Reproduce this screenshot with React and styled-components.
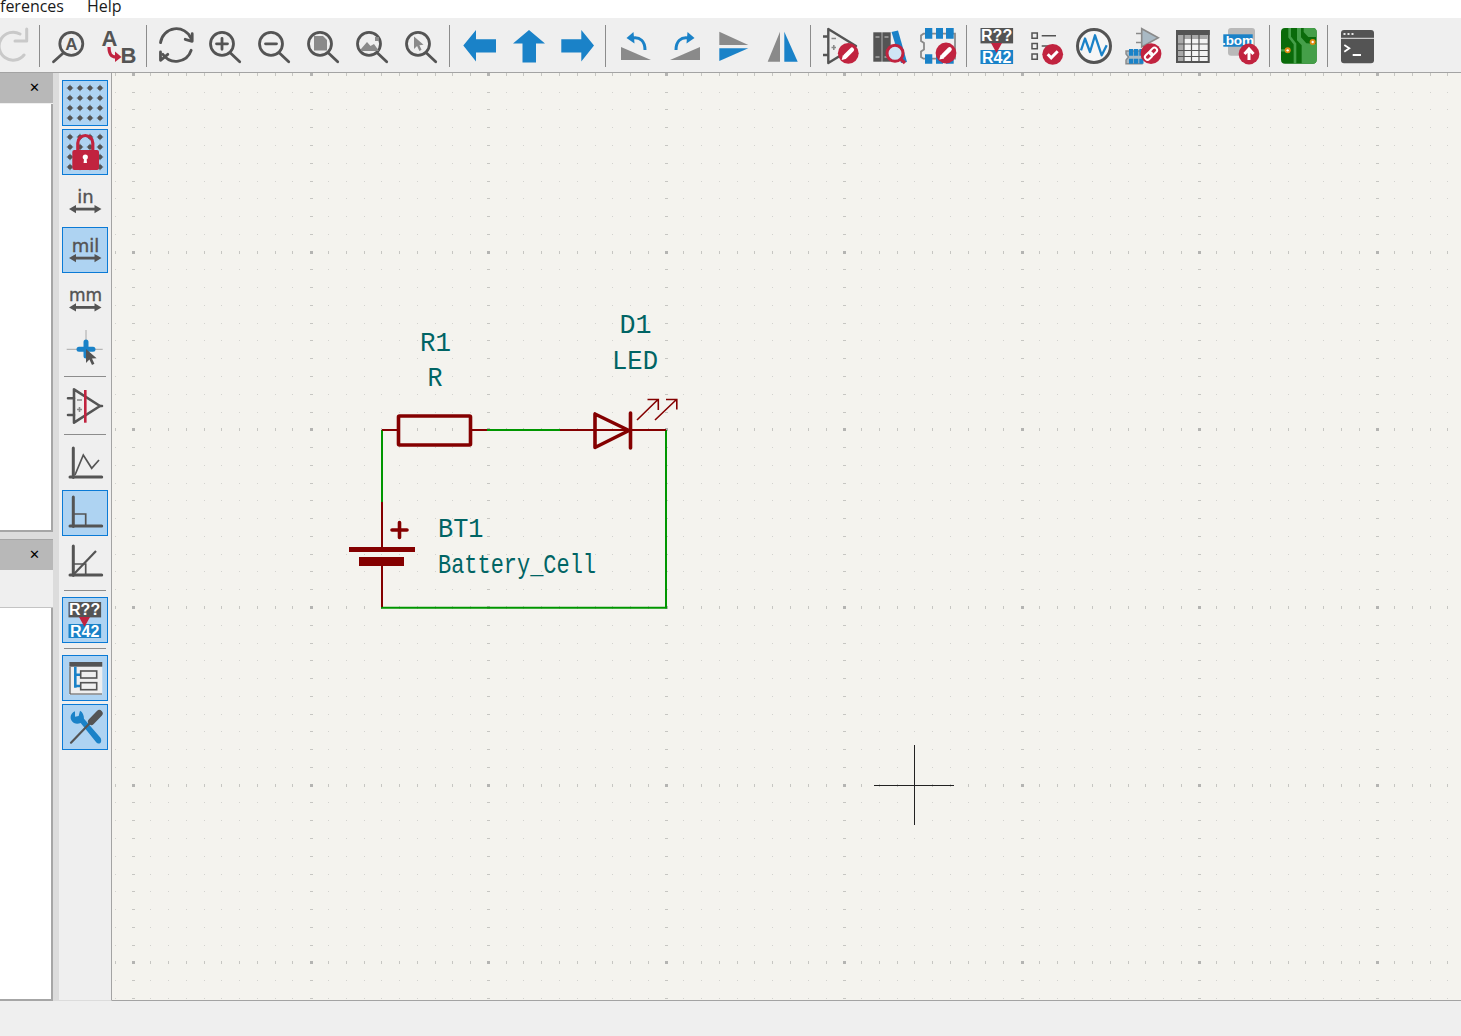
import React from 'react';
import styled, { createGlobalStyle } from 'styled-components';

const DARK = '#545454';
const GREY = '#8a8a8a';
const BLUE = '#1a82c8';
const RED = '#c1233f';
const WIRE = '#009600';
const SYM = '#840000';
const FIELD = '#006464';

const GlobalStyle = createGlobalStyle`
  html, body {
    margin: 0;
    padding: 0;
    background: #efefef;
    font-family: "Open Sans", "Liberation Sans", sans-serif;
    overflow: hidden;
  }
`;

const Window = styled.div`
  display: flex;
  flex-direction: column;
  height: 1036px;
  overflow: hidden;
`;

const MenuBar = styled.div`
  display: flex;
  gap: 23px;
  height: 18px;
  flex: none;
  background: #fff;
  overflow: hidden;
`;

const MenuItem = styled.span`
  margin-top: -5px;
  font-size: 16px;
  line-height: 22px;
  color: #1a1a1a;
`;

const Toolbar = styled.div`
  display: flex;
  gap: 3px;
  height: 55px;
  flex: none;
  box-sizing: border-box;
  padding-top: 5px;
  margin-left: -11px;
  background: #efefef;
  border-bottom: 1px solid #a3a3a3;
`;

const ToolButton = styled.div`
  width: 46px;
  height: 46px;
  flex: none;
`;

const ToolSeparator = styled.div`
  width: 6px;
  height: 42px;
  margin-top: 2px;
  flex: none;
  box-sizing: border-box;
  border-left: 1px solid #8c8c8c;
  margin-left: 1px;
  margin-right: -1px;
`;

const Main = styled.div`
  display: flex;
  flex: none;
  height: 928px;
`;

const Dock = styled.div`
  display: flex;
  flex-direction: column;
  gap: 7px;
  width: 59px;
  flex: none;
  background: #dcdcdc;
`;

const Panel = styled.div`
  display: flex;
  flex-direction: column;
  width: 53px;
  box-sizing: border-box;
  background: #fff;
  border-right: 2px solid #a6a6a6;
  border-bottom: 2px solid #a6a6a6;
  min-height: 0;
`;

const UpperPanel = styled(Panel)`
  flex: none;
  height: 459px;
`;

const LowerPanel = styled(Panel)`
  flex: 1;
  border-top: 1px solid #a6a6a6;
`;

const PanelHeader = styled.div`
  display: flex;
  align-items: center;
  justify-content: flex-end;
  height: 31px;
  flex: none;
  box-sizing: border-box;
  margin-right: -2px;
  padding: 0 13px 2px 0;
  background: #b8b8b8;
  border-bottom: 1px solid #efefef;
  font-family: "DejaVu Sans", sans-serif;
  font-size: 13px;
  color: #000;
`;

const PanelRow = styled.div`
  height: 36px;
  flex: none;
  margin-right: -2px;
  background: #efefef;
  border-bottom: 1px solid #c4c4c4;
`;

const Palette = styled.div`
  display: flex;
  flex-direction: column;
  align-items: flex-start;
  gap: 3px;
  width: 53px;
  flex: none;
  box-sizing: border-box;
  padding: 7px 0 0 3px;
  background: #efefef;
  border-right: 1px solid #a3a3a3;
  border-bottom: 1px solid #dcdcdc;
`;

const PaletteButton = styled.div`
  width: 46px;
  height: 46px;
  flex: none;
  box-sizing: border-box;
  background: ${({ $active }) => ($active ? '#aed3f2' : 'transparent')};
  border: 1px solid ${({ $active }) => ($active ? '#0a7ad6' : 'transparent')};
  display: flex;
  align-items: center;
  justify-content: center;
`;

const PaletteSeparator = styled.div`
  width: 42px;
  height: 6px;
  margin-left: 2px;
  flex: none;
  box-sizing: border-box;
  padding-top: 2px;

  &::before {
    content: '';
    display: block;
    height: 1px;
    background: #8c8c8c;
  }
`;

const Canvas = styled.div`
  position: relative;
  flex: 1;
  background: #f4f3ee;
  border-bottom: 1px solid #a3a3a3;
  overflow: hidden;
`;

const Sheet = styled.svg`
  position: absolute;
  inset: 0;
  display: block;
`;

const StatusBar = styled.div`
  flex: 1;
  background: #efefef;
`;

const IconSvg = styled.svg`
  display: block;
  width: 46px;
  height: 46px;
  flex: none;
`;

const IconLabel = styled.text`
  font-family: ${({ $family }) => $family || '"Liberation Sans", sans-serif'};
  font-weight: ${({ $weight }) => $weight || 700};
  font-size: ${({ $size }) => $size}px;
  fill: ${({ $fill }) => $fill || DARK};
  text-anchor: middle;
`;

const FieldText = styled.text`
  font-family: "Liberation Mono", "DejaVu Sans Mono", monospace;
  font-size: 28px;
  fill: ${FIELD};
`;

const Icon = ({ children }) => (
  <IconSvg viewBox="-23 -23 46 46">{children}</IconSvg>
);

const line = { fill: 'none', stroke: DARK, strokeWidth: 2.8, strokeLinecap: 'round', strokeLinejoin: 'round' };

// magnifier used by the zoom buttons
const Lens = ({ children }) => (
  <Icon>
    <g transform="translate(-1 0)">
      <circle cx="-3" cy="-2.2" r="11.5" {...line} />
      <path d="M5.7 7.3 L14.7 15.7" {...line} />
      {children}
    </g>
  </Icon>
);

const Badge = ({ cx = 7, cy = 7.5, children }) => (
  <g transform={`translate(${cx} ${cy})`}>
    <circle r="10.4" fill={RED} />
    {children}
  </g>
);

const Pencil = () => (
  <g>
    <path d="M-2.8 2.8 L3.6 -3.6" stroke="#fff" strokeWidth="4.4" strokeLinecap="round" />
    <path d="M-6.6 6.6 L-5.4 1.8 L-1.8 5.4 Z" fill="#fff" />
  </g>
);

const Cursor = ({ x, y, fill = GREY, s = 1 }) => (
  <path
    transform={`translate(${x} ${y}) scale(${s})`}
    d="M0 0 L0 14 L3.4 10.6 L6 16 L8.4 14.8 L6 9.6 L10.6 9.2 Z"
    fill={fill}
  />
);

const Annotate = () => (
  <Icon>
    <rect x="-16.5" y="-18" width="32.6" height="15.4" fill={DARK} />
    <rect x="-16.5" y="4" width="32.6" height="14" fill={BLUE} />
    <IconLabel x="-0.4" y="-5" $size={16} $fill="#fff">R??</IconLabel>
    <IconLabel x="-0.4" y="16.6" $size={16} $fill="#fff">R42</IconLabel>
    <path d="M-6 -3 L5 -3 L-0.5 7 Z" fill={RED} />
  </Icon>
);

const OpAmpOutline = () => (
  <>
    <path d="M-11 -16.7 L-11 16.7 L15 0 Z" fill="none" stroke={DARK} strokeWidth="2.6" strokeLinejoin="round" />
    <path d="M-17 -7.7 L-11 -7.7 M-17 9 L-11 9 M15 0 L17 0" stroke={DARK} strokeWidth="2.6" strokeLinecap="round" />
    <path d="M-8 -6 L-3 -6 M-8 3.5 L-3 3.5 M-5.5 1 L-5.5 6" stroke={GREY} strokeWidth="1.6" />
  </>
);

const PlotAxes = () => (
  <path d="M-11.7 -16 L-11.7 13.5 M-15 13 L16.7 13" fill="none" stroke={DARK} strokeWidth="3" strokeLinecap="round" />
);

const Units = ({ label, y, size = 18 }) => (
  <Icon>
    <IconLabel
      x="0.5"
      y={y}
      $size={size}
      $weight={400}
      $family={'"DejaVu Sans", sans-serif'}
      stroke={DARK}
      strokeWidth="0.4"
    >
      {label}
    </IconLabel>
    <path d={`M-11 ${y + 6.4} L12 ${y + 6.4}`} stroke={DARK} strokeWidth="2.8" />
    <path d={`M-16 ${y + 6.4} L-9 ${y + 2.2} L-9 ${y + 10.6} Z M16.5 ${y + 6.4} L9.5 ${y + 2.2} L9.5 ${y + 10.6} Z`} fill={DARK} />
  </Icon>
);

const GRID_DOTS = [-15, -5, 5, 15].flatMap((y) => [-15, -5, 5, 15].map((x) => [x, y]));

const GridDots = () => GRID_DOTS.map(([x, y]) => (
  <g key={`${x}_${y}`} fill={DARK}>
    <circle cx={x} cy={y} r="2.3" />
    <path d={`M${x - 3.2} ${y} H${x + 3.2} M${x} ${y - 3.2} V${y + 3.2}`} stroke={DARK} strokeWidth="1" />
  </g>
));

const ICONS = {
  redo: (
    <Icon>
      <path d="M8 -12 A14 14 0 1 0 12 9" fill="none" stroke="#c9c9c9" strokeWidth="3" strokeLinecap="round" />
      <path d="M3 -5 L14.7 -5 L14.7 -17" fill="none" stroke="#c9c9c9" strokeWidth="3" strokeLinecap="round" strokeLinejoin="round" />
    </Icon>
  ),
  find: (
    <Icon>
      <circle cx="1.3" cy="-2.2" r="11.5" {...line} />
      <path d="M-7 7.3 L-16.5 15.7" {...line} />
      <IconLabel x="1.3" y="3.8" $size={17}>A</IconLabel>
    </Icon>
  ),
  replace: (
    <Icon>
      <IconLabel x="-9.5" y="0" $size={22}>A</IconLabel>
      <IconLabel x="9.5" y="17" $size={22}>B</IconLabel>
      <path d="M-10 1 C-10 8 -8 11 -3 11" fill="none" stroke={RED} strokeWidth="3.2" />
      <path d="M-4 5.5 L2.5 11 L-4 16 Z" fill={RED} />
    </Icon>
  ),
  refresh: (
    <Icon>
      <g transform="translate(-0.5 0)">
        <path d="M-16 -3.3 A16 16 0 0 1 14.7 -7.3" {...line} />
        <path d="M15.7 -12.3 L15.7 -4.7 L8.7 -6.7" {...line} />
        <path d="M14.7 4.3 A16 16 0 0 1 -13.7 8.3" {...line} />
        <path d="M-16 6 L-16 14.3 L-8.7 8.3" {...line} />
      </g>
    </Icon>
  ),
  zoomIn: (
    <Lens>
      <path d="M-8.5 -2.2 H2.5 M-3 -7.7 V3.3" {...line} />
    </Lens>
  ),
  zoomOut: (
    <Lens>
      <path d="M-8.5 -2.2 H2.5" {...line} />
    </Lens>
  ),
  zoomFit: (
    <Lens>
      <path d="M-9 -10 L0 -10 L4 -6 L4 4.5 L-9 4.5 Z" fill={GREY} />
    </Lens>
  ),
  zoomObjects: (
    <Lens>
      <path d="M-11 5 L-11 3 L-5 -4 L-1.5 0 L2 -2 L7 5 Z" fill={GREY} />
      <rect x="3" y="-9" width="4" height="4" fill={GREY} />
    </Lens>
  ),
  zoomSelect: (
    <Lens>
      <Cursor x={-7} y={-9.5} s={0.9} />
    </Lens>
  ),
  left: (
    <Icon>
      <path d="M-16.7 -0.5 L-4 -16 L-4 -6.8 L16 -6.8 L16 6.5 L-4 6.5 L-4 15.5 Z" fill={BLUE} />
    </Icon>
  ),
  up: (
    <Icon>
      <path d="M0 -16 L16 -2.5 L7 -2.5 L7 16.5 L-6.5 16.5 L-6.5 -2.5 L-16 -2.5 Z" fill={BLUE} />
    </Icon>
  ),
  right: (
    <Icon>
      <path d="M16 -0.5 L3.3 -16 L3.3 -6.8 L-16.7 -6.8 L-16.7 6.5 L3.3 6.5 L3.3 15.5 Z" fill={BLUE} />
    </Icon>
  ),
  rotateCcw: (
    <Icon>
      <path d="M-15 1 L-15 14 L15 14 Z" fill={GREY} />
      <path d="M9 4 C9 -5 4 -9 -3 -8" fill="none" stroke={BLUE} strokeWidth="3" />
      <path d="M-9.5 -8 L-2.5 -14 L-1.5 -2.5 Z" fill={BLUE} />
    </Icon>
  ),
  rotateCw: (
    <Icon>
      <path d="M15 1 L15 14 L-15 14 Z" fill={GREY} />
      <path d="M-9 4 C-9 -5 -4 -9 3 -8" fill="none" stroke={BLUE} strokeWidth="3" />
      <path d="M9.5 -8 L2.5 -14 L1.5 -2.5 Z" fill={BLUE} />
    </Icon>
  ),
  mirrorH: (
    <Icon>
      <path d="M-14.7 -14.3 L-14.7 -1 L14.3 -1 Z" fill={GREY} />
      <path d="M-14.7 2.3 L-14.7 15 L14.3 2.3 Z" fill={BLUE} />
    </Icon>
  ),
  mirrorV: (
    <Icon>
      <path d="M-15.3 15.7 L-3 -14.3 L-3 15.7 Z" fill={GREY} />
      <path d="M1.3 -14.3 L1.3 15.7 L14.7 15.7 Z" fill={BLUE} />
    </Icon>
  ),
  symbolEditor: (
    <Icon>
      <path d="M-12.7 -17 L-12.7 17 L15 0 Z" fill="none" stroke={DARK} strokeWidth="2.4" strokeLinejoin="round" />
      <path d="M-18 -9.5 L-12.7 -9.5 M-18 9 L-12.7 9" stroke={DARK} strokeWidth="2.4" />
      <path d="M-9.5 -7.5 L-5 -7.5 M-9.5 1.5 L-5 1.5 M-7.2 -1 L-7.2 4" stroke={GREY} strokeWidth="1.6" />
      <Badge cx={7.3} cy={7.3}><Pencil /></Badge>
    </Icon>
  ),
  library: (
    <Icon>
      <rect x="-16.7" y="-13.7" width="8.4" height="29.4" fill={DARK} />
      <rect x="-7.7" y="-13.7" width="8.4" height="29.4" fill={DARK} />
      <path d="M-14.5 -9 H-10.5 M-5.5 -9 H-1.5 M-14.5 11 H-10.5 M-5.5 11 H-1.5" stroke="#cfcfcf" strokeWidth="1" />
      <path d="M1.5 -14 L8 -15.5 L17 16 L11 17 Z" fill={BLUE} />
      <circle cx="5" cy="7.3" r="8" fill="#cfe5f5" stroke={RED} strokeWidth="3" />
      <path d="M10.5 13 L15 17" stroke={RED} strokeWidth="3.4" />
    </Icon>
  ),
  footprint: (
    <Icon>
      <path d="M-15.5 -12.3 L16 -12.3 L16 12.7 L-15.5 12.7 L-18 11 L-18 5.5 L-15 3.5 L-15 -3 L-18 -5 L-18 -10.5 Z" fill="none" stroke={GREY} strokeWidth="1.8" />
      <path d="M-14 -18 H-6.7 V-7.3 H-14 Z M-3 -18 H4 V-7.3 H-3 Z M7 -18 H14.7 V-7.3 H7 Z M-14 8.3 H-6.7 V17.7 H-14 Z M-3 8.3 H4 V17.7 H-3 Z M7 8.3 H14.7 V17.7 H7 Z" fill={BLUE} />
      <Badge cx={7} cy={7}><Pencil /></Badge>
    </Icon>
  ),
  annotate: <Annotate />,
  erc: (
    <Icon>
      <path d="M-14 -13 H-8.7 V-7.7 H-14 Z M-14 -2.5 H-8.7 V2.8 H-14 Z M-14 8 H-8.7 V13.3 H-14 Z" fill="none" stroke={DARK} strokeWidth="1.5" />
      <path d="M-4.3 -10.3 H10 M-4.3 0 H2" stroke={DARK} strokeWidth="1.6" />
      <Badge cx={6.7} cy={8.3}>
        <path d="M-5 0 L-1.5 3.5 L5 -3" fill="none" stroke="#fff" strokeWidth="3" />
      </Badge>
    </Icon>
  ),
  simulator: (
    <Icon>
      <circle cx="-1" cy="0" r="16.5" fill="#f6f6f6" stroke={DARK} strokeWidth="3" />
      <path d="M-14 4.3 L-10 -7.5 L-5 6 L0 -10.7 L6.7 9.3 L11.7 -0.7" fill="none" stroke={BLUE} strokeWidth="2.3" strokeLinejoin="round" />
    </Icon>
  ),
  assign: (
    <Icon>
      <path d="M-2.3 -17.3 L-2.3 1 L14.3 -8.3 Z" fill="#a9b9c4" stroke={GREY} strokeWidth="1.6" />
      <path d="M-8 -12.5 L-2.3 -12.5 M-8 -3.5 L-2.3 -3.5" stroke={GREY} strokeWidth="1.6" />
      <path d="M-18 5 H-2 V17.7 H-18 V14 L-15.5 11 L-18 8 Z" fill="#a9b9c4" stroke={GREY} strokeWidth="1.4" />
      <path d="M-15 3 H-10.7 V9.7 H-15 Z M-10 3 H-5.7 V9.7 H-10 Z M-4.7 3 H-0.5 V9.7 H-4.7 Z M-15 12.7 H-10.7 V17.7 H-15 Z M-10 12.7 H-5.7 V17.7 H-10 Z M-4.7 12.7 H-0.5 V17.7 H-4.7 Z" fill={BLUE} />
      <Badge cx={7} cy={7.7}>
        <g transform="rotate(-45)" fill="none" stroke="#fff" strokeWidth="2">
          <rect x="-7.5" y="-2.6" width="8.5" height="5.2" rx="2.6" />
          <rect x="-1" y="-2.6" width="8.5" height="5.2" rx="2.6" />
        </g>
      </Badge>
    </Icon>
  ),
  table: (
    <Icon>
      <rect x="-16" y="-15" width="31.7" height="31" fill="#f4f4f4" stroke={DARK} strokeWidth="2" />
      <rect x="-17" y="-16" width="33.7" height="5" fill={DARK} />
      <rect x="-15" y="-11" width="29.7" height="4" fill="#a9a9a9" />
      <rect x="-15" y="-11" width="6" height="26" fill="#a9a9a9" />
      <path d="M-9 -11 V16 M-1.5 -11 V16 M6 -11 V16 M-15 -2 H15 M-15 4.5 H15 M-15 10.5 H15" stroke={DARK} strokeWidth="1.2" />
    </Icon>
  ),
  bom: (
    <Icon>
      <rect x="-14" y="-18" width="27" height="27.7" rx="3" fill="#b9b9b9" />
      <rect x="-18.7" y="-11.7" width="29.4" height="12.4" fill={BLUE} />
      <IconLabel x="-4" y="-1.2" $size={13.5} $fill="#fff" $weight={700}>.bom</IconLabel>
      <Badge cx={7} cy={8}>
        <path d="M0 6 V-4 M-4.5 0 L0 -5 L4.5 0" fill="none" stroke="#fff" strokeWidth="3" />
      </Badge>
    </Icon>
  ),
  pcb: (
    <Icon>
      <g transform="translate(-25 -24) scale(0.3333)">
        <rect x="18" y="18" width="107" height="107" rx="12" fill="#0a6b0a" />
        <path d="M80 125 L80 70 L66 55 L66 18 L78 18 L78 46 L94 64 L125 66 L125 113 Q125 125 113 125 Z" fill="#459f49" />
        <path d="M86 18 L113 18 Q125 18 125 30 L125 45 L100 45 L86 30 Z" fill="#459f49" />
        <path d="M44 18 L44 45 L60 66 L60 125" fill="none" stroke="#459f49" strokeWidth="8" />
        <path d="M18 85 L38 85" stroke="#459f49" strokeWidth="7" />
        <circle cx="113" cy="60" r="9" fill="#e08a12" />
        <circle cx="113" cy="60" r="3.5" fill="#fff" />
        <circle cx="38" cy="85" r="9" fill="#e08a12" />
        <circle cx="38" cy="85" r="3.5" fill="#fff" />
      </g>
    </Icon>
  ),
  terminal: (
    <Icon>
      <rect x="-17" y="-16" width="33" height="33.3" rx="3" fill={DARK} />
      <path d="M-17 -7.7 H16" stroke="#e6e6e6" strokeWidth="1" />
      <path d="M-14.5 -12 h2 M-10.5 -12 h2 M-6.5 -12 h2" stroke="#e6e6e6" strokeWidth="2" />
      <path d="M-13.7 -1 L-8.7 2.3 L-13.7 5.7" fill="none" stroke="#fff" strokeWidth="1.8" />
      <path d="M-5.3 9 H3" stroke="#fff" strokeWidth="2" />
    </Icon>
  ),
  grid: <Icon><GridDots /></Icon>,
  gridLock: (
    <Icon>
      <GridDots />
      <path d="M-7.2 -2 V-9 A7.5 7.5 0 0 1 7.8 -9 V-2" fill="none" stroke={RED} strokeWidth="3.2" />
      <rect x="-12.7" y="-2" width="26.7" height="20" rx="2" fill={RED} />
      <circle cx="0.3" cy="5" r="2.6" fill="#fff" />
      <path d="M-0.8 5 H1.4 L2 11 H-1.4 Z" fill="#fff" />
    </Icon>
  ),
  inch: <Units label="in" y={1.7} />,
  mil: <Units label="mil" y={1.7} />,
  mm: <Units label="mm" y={2} size={17} />,
  cursorShape: (
    <Icon>
      <path d="M-18.3 1.3 H17.7 M1 -18 V8" stroke="#a8a8a8" strokeWidth="1" />
      <path d="M-6 1.3 H8 M1 -6 V8" stroke={BLUE} strokeWidth="5" strokeLinecap="round" />
      <Cursor x={1} y={1} fill={DARK} />
    </Icon>
  ),
  hidePins: (
    <Icon>
      <OpAmpOutline />
      <path d="M0.3 -16 V16.7" stroke={RED} strokeWidth="2.6" />
    </Icon>
  ),
  lineFree: (
    <Icon>
      <PlotAxes />
      <path d="M-10 11 L-1.7 -9 L6.7 4.3 L14 -4" fill="none" stroke={DARK} strokeWidth="1.7" />
    </Icon>
  ),
  line90: (
    <Icon>
      <PlotAxes />
      <path d="M-11 1 H0.7 V12" fill="none" stroke={DARK} strokeWidth="1.7" />
    </Icon>
  ),
  line45: (
    <Icon>
      <PlotAxes />
      <path d="M-11 2 H0.7 V12" fill="none" stroke={DARK} strokeWidth="1.7" />
      <path d="M-11 12 L11 -11" stroke={DARK} strokeWidth="2.2" />
    </Icon>
  ),
  hierarchy: (
    <Icon>
      <rect x="-15.7" y="-16" width="33" height="32.7" fill="#efefef" />
      <rect x="-15.7" y="-16" width="33" height="4.7" fill={DARK} />
      <path d="M-15 -11 V16 M-15 16 H17" stroke={DARK} strokeWidth="1.2" />
      <path d="M-9.7 -11.3 V9.7 M-9.7 -3.3 H-4.3 M-9.7 8 H-4.3" stroke={BLUE} strokeWidth="2.6" fill="none" />
      <rect x="-4.3" y="-7" width="16" height="7" fill="#efefef" stroke={DARK} strokeWidth="1.6" />
      <rect x="-4.3" y="4.7" width="16" height="7" fill="#efefef" stroke={DARK} strokeWidth="1.6" />
    </Icon>
  ),
  tools: (
    <Icon>
      <g transform="translate(-25 -75) scale(0.3333)">
        <path d="M45 178 C28 185 28 205 42 213 C50 217 56 215 62 213 L108 270 C116 280 128 274 122 258 L72 200 C72 190 68 180 60 176 L56 192 L45 194 Z" fill={BLUE} />
        <path d="M118 184 L94 209" stroke={DARK} strokeWidth="20" strokeLinecap="round" />
        <path d="M90 213 L33 272" stroke={DARK} strokeWidth="6.5" strokeLinecap="round" />
      </g>
    </Icon>
  ),
};

const TOP_TOOLS = [
  'redo', '|', 'find', 'replace', '|', 'refresh', 'zoomIn', 'zoomOut', 'zoomFit', 'zoomObjects', 'zoomSelect', '|',
  'left', 'up', 'right', '|', 'rotateCcw', 'rotateCw', 'mirrorH', 'mirrorV', '|',
  'symbolEditor', 'library', 'footprint', '|', 'annotate', 'erc', 'simulator', 'assign', 'table', 'bom', '|', 'pcb', '|', 'terminal',
];

const SIDE_TOOLS = [
  ['grid', true], ['gridLock', true], ['inch'], ['mil', true], ['mm'], ['cursorShape'], '|',
  ['hidePins'], '|', ['lineFree'], ['line90', true], ['line45'], '|', ['annotate', true], '|',
  ['hierarchy', true], ['tools', true],
];

// the canvas dot grid: 50 mil pitch with a heavier mark every tenth step
const PITCH = 17.77;
const ORIGIN_X = 133;
const ORIGIN_Y = 962.9;

const buildGrid = () => {
  let small = '';
  let ticks = '';
  let major = '';
  for (let j = -3; j < 54; j += 1) {
    const ry = ORIGIN_Y - j * PITCH;
    const rowMajor = ((j % 10) + 10) % 10 === 0;
    for (let i = -1; i < 76; i += 1) {
      const cx = ORIGIN_X + i * PITCH;
      const colMajor = ((i % 10) + 10) % 10 === 0;
      const x = Math.floor(cx);
      const y = Math.floor(ry);
      if (rowMajor && colMajor) major += `M${Math.round(cx) - 1} ${y - 1}h3v3h-3z`;
      else if (rowMajor) ticks += `M${x} ${y - 1}h1v3h-1z`;
      else if (colMajor) ticks += `M${Math.round(cx) - 1} ${y}h3v1h-3z`;
      else small += `M${x} ${y}h1v1h-1z`;
    }
  }
  return { small, ticks, major };
};

const GRID = buildGrid();

const wire = { fill: 'none', stroke: WIRE, strokeWidth: 2 };
const pin = { fill: 'none', stroke: SYM, strokeWidth: 2 };
const body = { fill: 'none', stroke: SYM, strokeWidth: 3.6, strokeLinejoin: 'round', strokeLinecap: 'round' };

const Schematic = () => (
  <Sheet width="1349" height="927" viewBox="112 73 1349 927">
    <g shapeRendering="crispEdges">
      <path d={GRID.small} fill="#d2d2ce" />
      <path d={GRID.ticks} fill="#c6c6c2" />
      <path d={GRID.major} fill="#b4b4b2" />
    </g>

    <path d="M382 430 L382 502 M487 430 L560 430 M666 430 L666 607.7 L381 607.7" {...wire} />
    <path d="M382 430 L398 430 M471 430 L487 430 M560 430 L666 430 M382 502 L382 548 M382 560 L382 607" {...pin} />

    <rect x="398.5" y="416" width="72" height="29" rx="1" {...body} />
    <path d="M595 414 L595 447.5 L629 430.5 Z" {...body} />
    <path d="M630.5 413 L630.5 448" {...body} />
    <path d="M637 420 L658 399.5 M647.5 399.5 L658.3 399.5 L658.3 410" fill="none" stroke={SYM} strokeWidth="1.6" />
    <path d="M655 420 L676.5 399.5 M666 399.5 L676.8 399.5 L676.8 409.5" fill="none" stroke={SYM} strokeWidth="1.6" />

    <rect x="349" y="547" width="66" height="5" fill={SYM} />
    <rect x="359" y="557" width="45" height="9" fill={SYM} />
    <path d="M392 530 L407 530 M399.5 522.5 L399.5 537.5" {...body} />

    <FieldText x="420" y="351" textLength="31" lengthAdjust="spacingAndGlyphs">R1</FieldText>
    <FieldText x="427.5" y="386" textLength="15" lengthAdjust="spacingAndGlyphs">R</FieldText>
    <FieldText x="619.5" y="332.5" textLength="32" lengthAdjust="spacingAndGlyphs">D1</FieldText>
    <FieldText x="612" y="368.5" textLength="46" lengthAdjust="spacingAndGlyphs">LED</FieldText>
    <FieldText x="438" y="537" textLength="45.5" lengthAdjust="spacingAndGlyphs">BT1</FieldText>
    <FieldText x="438" y="573" textLength="158" lengthAdjust="spacingAndGlyphs">Battery_Cell</FieldText>

    <path d="M874 785.5 H954 M914.5 745 V825" stroke="#222" strokeWidth="1" />
  </Sheet>
);

export default function App() {
  return (
    <Window>
      <GlobalStyle />
      <MenuBar>
        <MenuItem>ferences</MenuItem>
        <MenuItem>Help</MenuItem>
      </MenuBar>

      <Toolbar>
        {TOP_TOOLS.map((name, i) =>
          name === '|' ? (
            <ToolSeparator key={i} />
          ) : (
            <ToolButton key={i}>{ICONS[name]}</ToolButton>
          )
        )}
      </Toolbar>

      <Main>
        <Dock>
          <UpperPanel>
            <PanelHeader>✕</PanelHeader>
          </UpperPanel>
          <LowerPanel>
            <PanelHeader>✕</PanelHeader>
            <PanelRow />
          </LowerPanel>
        </Dock>

        <Palette>
          {SIDE_TOOLS.map((tool, i) =>
            tool === '|' ? (
              <PaletteSeparator key={i} />
            ) : (
              <PaletteButton key={i} $active={tool[1]}>{ICONS[tool[0]]}</PaletteButton>
            )
          )}
        </Palette>

        <Canvas>
          <Schematic />
        </Canvas>
      </Main>

      <StatusBar />
    </Window>
  );
}
